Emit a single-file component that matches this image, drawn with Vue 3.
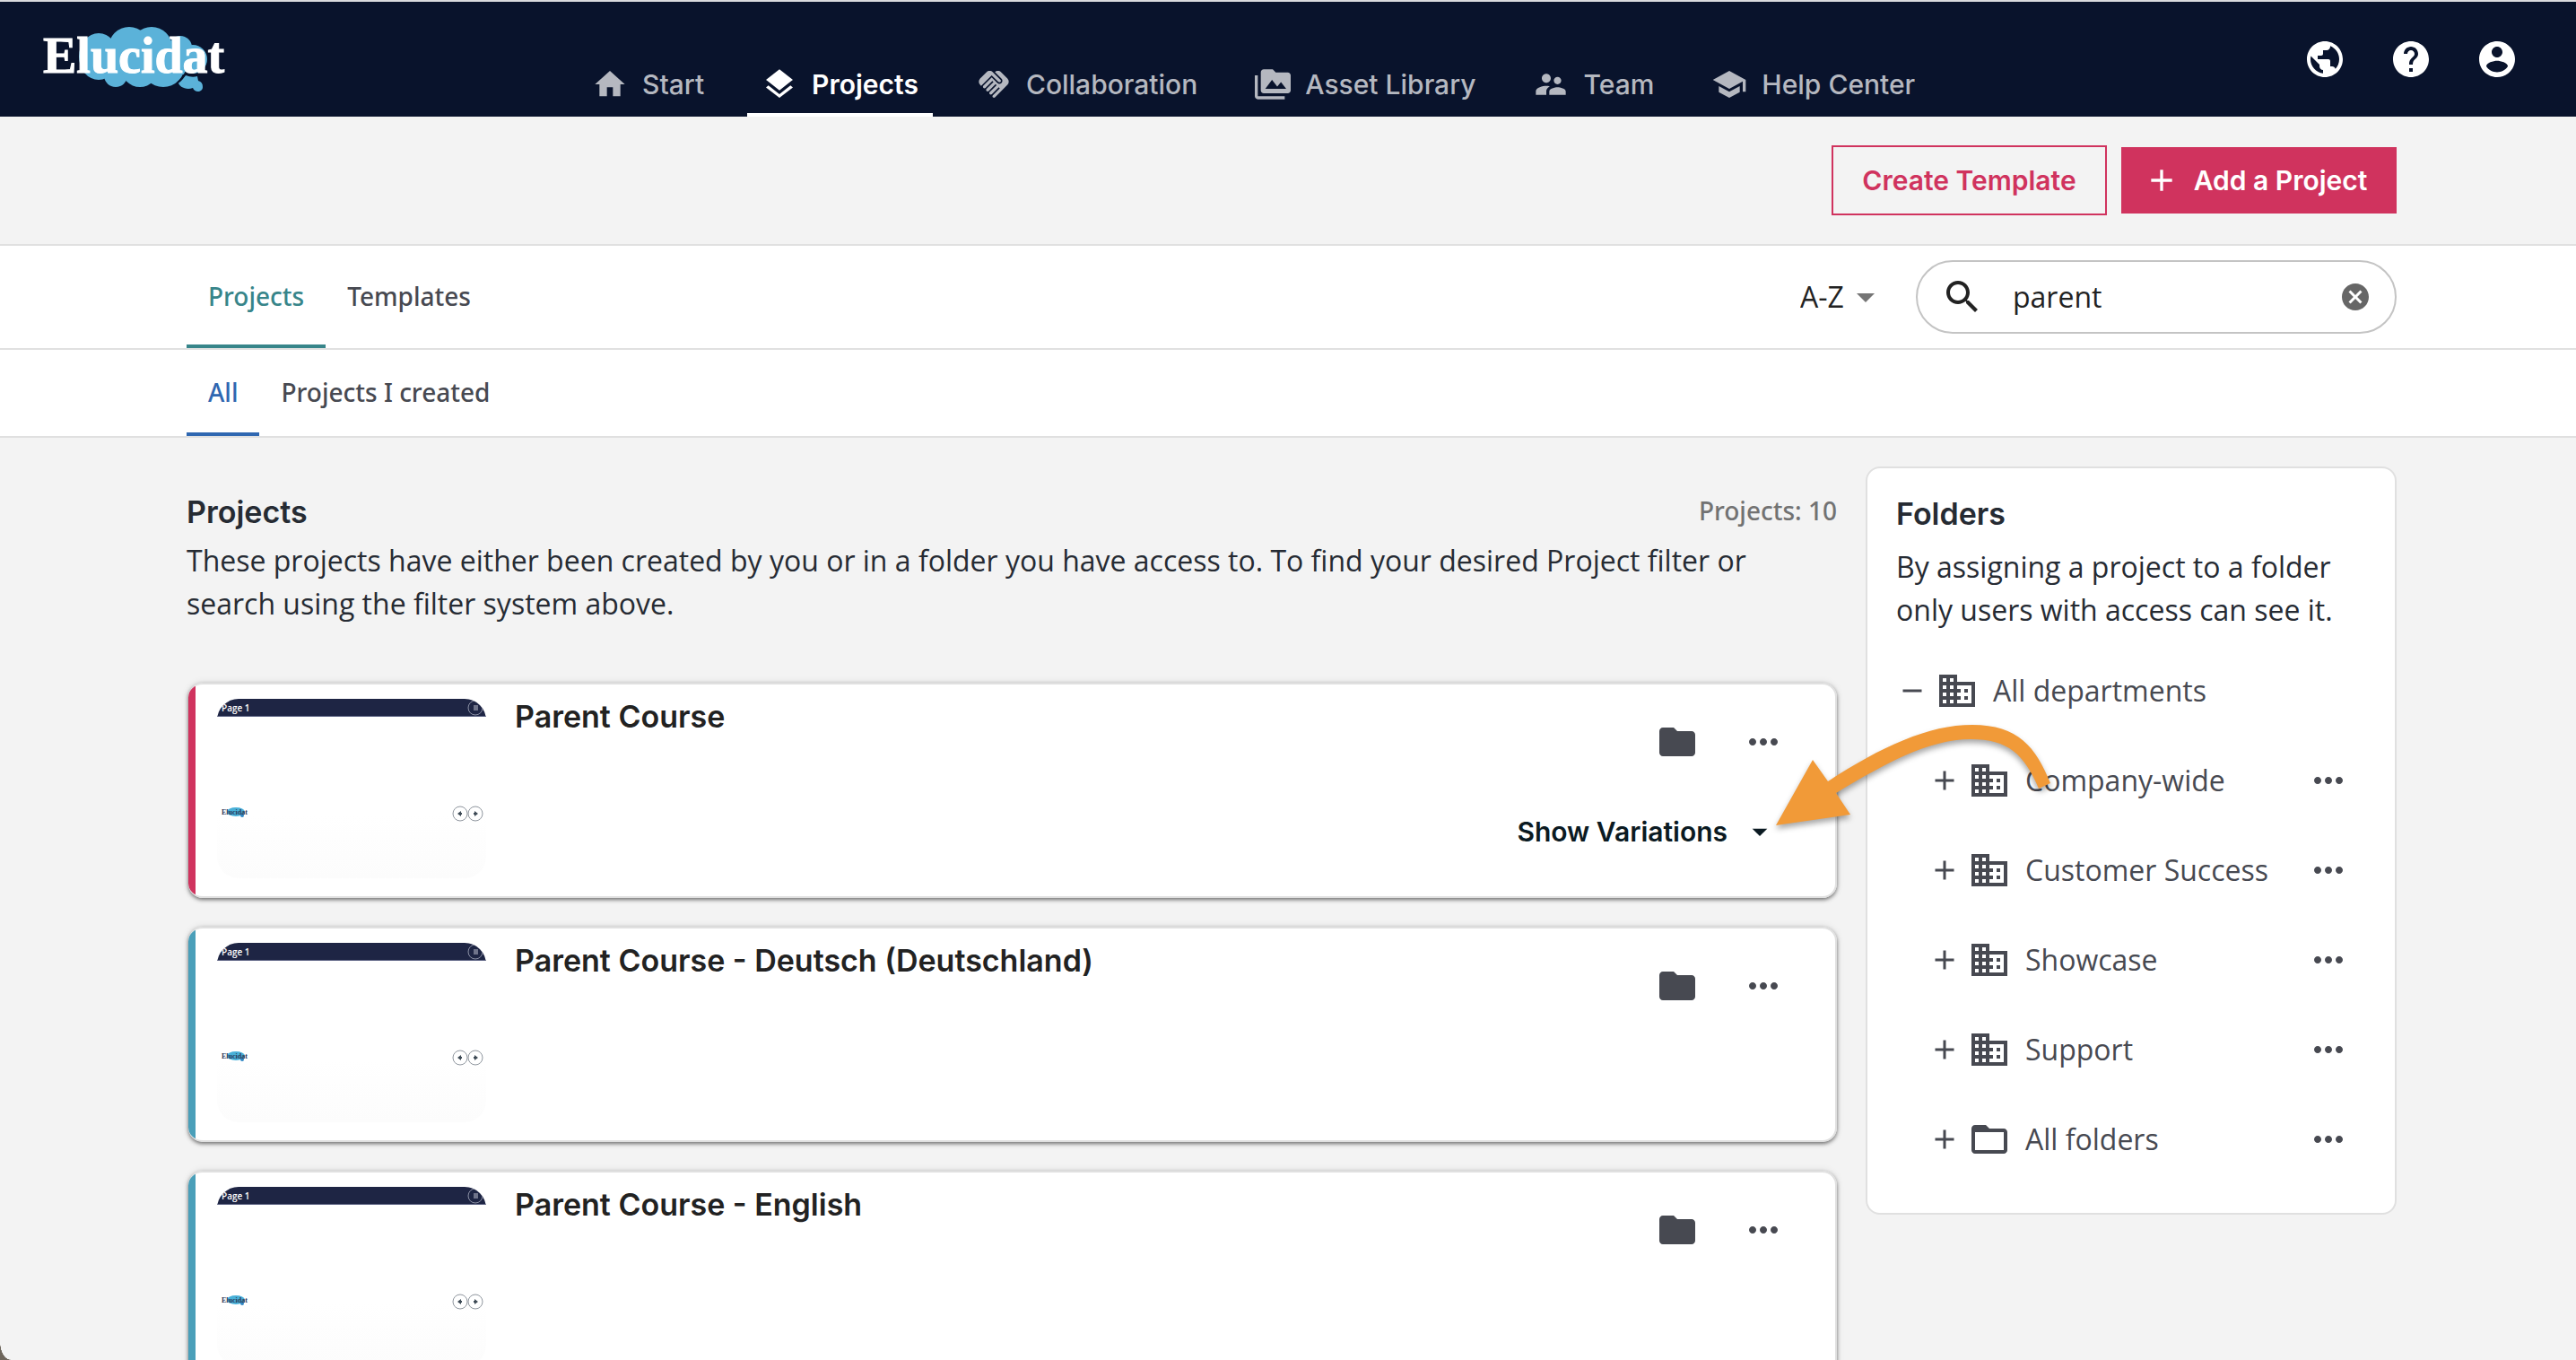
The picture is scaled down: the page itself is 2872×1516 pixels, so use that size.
<script setup>
import { ref } from 'vue'

const icons = {
  home: 'M10 20v-6h4v6h5v-8h3L12 3 2 12h3v8z',
  layers: 'M11.99 18.54l-7.37-5.73L3 14.07l9 7 9-7-1.63-1.27-7.38 5.74zM12 16l7.36-5.73L21 9l-9-7-9 7 1.63 1.27L12 16z',
  handshake: 'M16.48 10.41c-.39.39-1.04.39-1.43 0l-4.47-4.46-7.05 7.04-.66-.63c-1.17-1.17-1.17-3.07 0-4.24l4.24-4.24c1.17-1.17 3.07-1.17 4.24 0L16.48 9c.39.39.39 1.02 0 1.41zM17.18 8.29c.78.78.78 2.05 0 2.83-1.27 1.27-2.61.22-2.83 0l-3.76-3.76-5.57 5.57c-.39.39-.39 1.02 0 1.41.39.39 1.02.39 1.42 0l4.62-4.62.71.71-4.62 4.62c-.39.39-.39 1.02 0 1.41.39.39 1.02.39 1.42 0l4.62-4.62.71.71-4.62 4.62c-.39.39-.39 1.02 0 1.41.39.39 1.02.39 1.41 0l4.62-4.62.71.71-4.62 4.62c-.39.39-.39 1.02 0 1.41.39.39 1.02.39 1.41 0l8.32-8.34c1.17-1.17 1.17-3.07 0-4.24l-4.24-4.24c-1.15-1.15-3.01-1.17-4.18-.06l4.47 4.47z',
  media: 'M2 6H0v5h.01L0 20c0 1.1.9 2 2 2h18v-2H2V6zm20-2h-8l-2-2H6c-1.1 0-1.99.9-1.99 2L4 16c0 1.1.9 2 2 2h16c1.1 0 2-.9 2-2V6c0-1.1-.9-2-2-2zM7 15l4.5-6 3.5 4.51 2.5-3.01L21 15H7z',
  team: 'M16.5 12c1.38 0 2.49-1.12 2.49-2.5S17.88 7 16.5 7C15.12 7 14 8.12 14 9.5s1.12 2.5 2.5 2.5zM9 11c1.66 0 2.99-1.34 2.99-3S10.66 5 9 5C7.34 5 6 6.34 6 8s1.34 3 3 3zm7.5 3c-1.83 0-5.5.92-5.5 2.75V19h11v-2.25c0-1.83-3.67-2.75-5.5-2.75zM9 13c-2.33 0-7 1.17-7 3.5V19h7v-2.25c0-.85.33-2.34 2.37-3.47C10.5 13.1 9.66 13 9 13z',
  school: 'M5 13.18v4L12 21l7-3.82v-4L12 17l-7-3.82zM12 3L1 9l11 6 9-4.91V17h2V9L12 3z',
  globe: 'M12 2C6.48 2 2 6.48 2 12s4.48 10 10 10 10-4.48 10-10S17.52 2 12 2zm-1 17.93c-3.95-.49-7-3.85-7-7.93 0-.62.08-1.21.21-1.79L9 15v1c0 1.1.9 2 2 2v1.93zm6.9-2.54c-.26-.81-1-1.39-1.9-1.39h-1v-3c0-.55-.45-1-1-1H8v-2h2c.55 0 1-.45 1-1V7h2c1.1 0 2-.9 2-2v-.41c2.93 1.19 5 4.06 5 7.41 0 2.08-.8 3.97-2.1 5.39z',
  help: 'M12 2C6.48 2 2 6.48 2 12s4.48 10 10 10 10-4.48 10-10S17.52 2 12 2zm1 17h-2v-2h2v2zm2.07-7.75l-.9.92C13.45 12.9 13 13.5 13 15h-2v-.5c0-1.1.45-2.1 1.17-2.83l1.24-1.26c.37-.36.59-.86.59-1.41 0-1.1-.9-2-2-2s-2 .9-2 2H8c0-2.21 1.79-4 4-4s4 1.79 4 4c0 .88-.36 1.68-.93 2.25z',
  account: 'M12 2C6.48 2 2 6.48 2 12s4.48 10 10 10 10-4.48 10-10S17.52 2 12 2zm0 3c1.66 0 3 1.34 3 3s-1.34 3-3 3-3-1.34-3-3 1.34-3 3-3zm0 14.2c-2.5 0-4.71-1.28-6-3.22.03-1.99 4-3.08 6-3.08 1.99 0 5.97 1.09 6 3.08-1.29 1.94-3.5 3.22-6 3.22z',
  search: 'M15.5 14h-.79l-.28-.27C15.41 12.59 16 11.11 16 9.5 16 5.91 13.09 3 9.5 3S3 5.91 3 9.5 5.91 16 9.5 16c1.61 0 3.09-.59 4.23-1.57l.27.28v.79l5 4.99L20.49 19l-4.99-5zm-6 0C7.01 14 5 11.99 5 9.5S7.01 5 9.5 5 14 7.01 14 9.5 11.99 14 9.5 14z',
  cancel: 'M12 2C6.47 2 2 6.47 2 12s4.47 10 10 10 10-4.47 10-10S17.53 2 12 2zm5 13.59L15.59 17 12 13.41 8.41 17 7 15.59 10.59 12 7 8.41 8.41 7 12 10.59 15.59 7 17 8.41 13.41 12 17 15.59z',
  caret: 'M7 10l5 5 5-5z',
  folder: 'M10 4H4c-1.1 0-1.99.9-1.99 2L2 18c0 1.1.9 2 2 2h16c1.1 0 2-.9 2-2V8c0-1.1-.9-2-2-2h-8l-2-2z',
  folderOpen: 'M20 6h-8l-2-2H4c-1.1 0-1.99.9-1.99 2L2 18c0 1.1.9 2 2 2h16c1.1 0 2-.9 2-2V8c0-1.1-.9-2-2-2zm0 12H4V8h16v10z',
  business: 'M12 7V3H2v18h20V7H12zM6 19H4v-2h2v2zm0-4H4v-2h2v2zm0-4H4V9h2v2zm0-4H4V5h2v2zm4 12H8v-2h2v2zm0-4H8v-2h2v2zm0-4H8V9h2v2zm0-4H8V5h2v2zm10 12h-8v-2h2v-2h-2v-2h2v-2h-2V9h8v10zm-2-8h-2v2h2v-2zm0 4h-2v2h2v-2z',
  more: 'M6 10c-1.1 0-2 .9-2 2s.9 2 2 2 2-.9 2-2-.9-2-2-2zm12 0c-1.1 0-2 .9-2 2s.9 2 2 2 2-.9 2-2-.9-2-2-2zm-6 0c-1.1 0-2 .9-2 2s.9 2 2 2 2-.9 2-2-.9-2-2-2z',
  plus: 'M19 13h-6v6h-2v-6H5v-2h6V5h2v6h6v2z',
  minus: 'M19 13H5v-2h14v2z',
}

const nav = [
  { label: 'Start', icon: 'home' },
  { label: 'Projects', icon: 'layers', active: true },
  { label: 'Collaboration', icon: 'handshake' },
  { label: 'Asset Library', icon: 'media' },
  { label: 'Team', icon: 'team' },
  { label: 'Help Center', icon: 'school' },
]

const utilities = [
  { label: 'Language', icon: 'globe' },
  { label: 'Help', icon: 'help' },
  { label: 'Account', icon: 'account' },
]

const projects = [
  { title: 'Parent Course', parent: true },
  { title: 'Parent Course - Deutsch (Deutschland)' },
  { title: 'Parent Course - English' },
]

const folders = [
  { name: 'Company-wide', icon: 'business' },
  { name: 'Customer Success', icon: 'business' },
  { name: 'Showcase', icon: 'business' },
  { name: 'Support', icon: 'business' },
  { name: 'All folders', icon: 'folderOpen' },
]

const sort = ref('A-Z')
const query = ref('parent')
</script>

<template>
  <div class="app">
    <header class="topbar">
      <a class="brand" href="#" aria-label="Elucidat">
        <svg width="212" height="80" viewBox="46 26 212 80">
          <g fill="#5bb2d9">
            <ellipse cx="110" cy="63" rx="22" ry="26" />
            <circle cx="144" cy="53" r="23" />
            <circle cx="169" cy="53" r="23" />
            <circle cx="201" cy="53" r="13" />
            <circle cx="215" cy="66" r="16" />
            <circle cx="129" cy="84" r="13" />
            <circle cx="156" cy="76" r="21" />
            <circle cx="182" cy="73" r="24" />
            <rect x="115" y="50" width="92" height="33" />
            <path d="M207 84q7 3 13 1l1 5a7 7 0 0 1 5 7c0 6-9 7-11 1-8 3-16-2-16-6z" />
          </g>
          <path d="M198 92q6-4 9-11 8 4 16 1" fill="none" stroke="#09132c" stroke-width="2" />
          <text class="wordmark" x="48" y="81">Elucidat</text>
        </svg>
      </a>
      <nav class="nav" aria-label="Main">
        <a v-for="item in nav" :key="item.label" href="#" class="nav-link" :class="{ active: item.active }">
          <svg class="i40" viewBox="0 0 24 24"><path :d="icons[item.icon]" /></svg>
          <span>{{ item.label }}</span>
        </a>
      </nav>
      <div class="utilities">
        <button v-for="u in utilities" :key="u.label" type="button" :aria-label="u.label">
          <svg class="i48" viewBox="0 0 24 24"><path :d="icons[u.icon]" /></svg>
        </button>
      </div>
    </header>

    <section class="actions band">
      <button type="button" class="btn outline">Create Template</button>
      <button type="button" class="btn solid">
        <svg class="i40" viewBox="0 0 24 24"><path :d="icons.plus" /></svg>
        <span>Add a Project</span>
      </button>
    </section>

    <section class="filters band">
      <nav class="tabs teal" aria-label="Content type">
        <a href="#" class="active">Projects</a>
        <a href="#">Templates</a>
      </nav>
      <div class="tools">
        <label class="sort">
          <select v-model="sort" aria-label="Sort order">
            <option>A-Z</option>
            <option>Z-A</option>
          </select>
          <svg class="i48" viewBox="0 0 24 24"><path :d="icons.caret" /></svg>
        </label>
        <label class="search">
          <svg class="i48" viewBox="0 0 24 24"><path :d="icons.search" /></svg>
          <input v-model="query" type="text" aria-label="Search projects" />
          <button type="button" aria-label="Clear search" @click="query = ''">
            <svg class="i36" viewBox="0 0 24 24"><path :d="icons.cancel" /></svg>
          </button>
        </label>
      </div>
    </section>

    <section class="subfilters band">
      <nav class="tabs blue" aria-label="Ownership">
        <a href="#" class="active">All</a>
        <a href="#">Projects I created</a>
      </nav>
    </section>

    <main class="content">
      <section class="projects">
        <div class="heading">
          <h1>Projects</h1>
          <span class="count">Projects: 10</span>
        </div>
        <p>These projects have either been created by you or in a folder you have access to. To find your desired Project filter or search using the filter system above.</p>

        <div class="cards">
          <article v-for="p in projects" :key="p.title" class="card" :class="{ parent: p.parent }">
            <div class="thumb">
              <div class="thumb-bar">
                <span>Page 1</span>
                <svg width="18" height="18" viewBox="0 0 18 18">
                  <circle cx="9" cy="9" r="8" fill="none" stroke="#8c91a5" />
                  <path d="M7 7h5M7 9h5M7 11h5" stroke="#c0c3d0" />
                </svg>
              </div>
              <div class="thumb-foot">
                <svg width="32" height="14" viewBox="0 0 32 14">
                  <ellipse cx="17" cy="6" rx="10" ry="5" fill="#48b0d8" />
                  <circle cx="24" cy="10" r="2" fill="#2f86c4" />
                  <text class="thumb-logo" x="1" y="9">Elucidat</text>
                </svg>
                <svg width="36" height="18" viewBox="0 0 36 18">
                  <g fill="none" stroke="#8f969e">
                    <circle cx="10" cy="8" r="8" />
                    <circle cx="27" cy="8" r="8" />
                  </g>
                  <path d="M7 8l4-3v2h1v2h-1v2zM30 8l-4-3v2h-1v2h1v2z" fill="#3d4a55" />
                </svg>
              </div>
            </div>
            <h2>{{ p.title }}</h2>
            <div class="card-side">
              <div class="card-icons">
                <button type="button" aria-label="Move to folder">
                  <svg class="i48" viewBox="0 0 24 24"><path :d="icons.folder" /></svg>
                </button>
                <button type="button" aria-label="More options">
                  <svg class="i48" viewBox="0 0 24 24"><path :d="icons.more" /></svg>
                </button>
              </div>
              <button v-if="p.parent" type="button" class="variations">
                <span>Show Variations</span>
                <svg class="i40" viewBox="0 0 24 24"><path :d="icons.caret" /></svg>
              </button>
            </div>
          </article>
        </div>
      </section>

      <aside class="folders">
        <h2>Folders</h2>
        <p>By assigning a project to a folder only users with access can see it.</p>
        <div class="row">
          <button type="button" aria-label="Collapse All departments">
            <svg class="i36" viewBox="0 0 24 24"><path :d="icons.minus" /></svg>
          </button>
          <svg class="i48" viewBox="0 0 24 24"><path :d="icons.business" /></svg>
          <a href="#">All departments</a>
        </div>
        <div v-for="f in folders" :key="f.name" class="row child">
          <button type="button" :aria-label="'Expand ' + f.name">
            <svg class="i36" viewBox="0 0 24 24"><path :d="icons.plus" /></svg>
          </button>
          <svg class="i48" viewBox="0 0 24 24"><path :d="icons[f.icon]" /></svg>
          <a href="#">{{ f.name }}</a>
          <button type="button" class="row-more" :aria-label="'Options for ' + f.name">
            <svg class="i48" viewBox="0 0 24 24"><path :d="icons.more" /></svg>
          </button>
        </div>

        <!-- callout arrow pointing from the folder list to the variations toggle -->
        <svg class="callout" width="320" height="130" viewBox="1974 800 320 130">
          <path d="M1980 919L2021 846 2038 870C2098 831 2150 807 2199 807 2250 807 2270 832 2286 872L2273 878C2257 840 2239 823 2197 823 2150 823 2100 851 2047 883L2063 907Z" />
        </svg>
      </aside>
    </main>
    <span class="corner" aria-hidden="true"></span>
  </div>
</template>

<style>
body {
  background: #f3f3f3;
}
</style>

<style scoped>
* {
  box-sizing: border-box;
}
.app {
  position: relative;
  display: flex;
  flex-direction: column;
  height: 100vh;
  overflow: hidden;
  background: #f3f3f3;
  color: #262b33;
  font-family: "Open Sans", "Noto Sans", sans-serif;
  font-size: 32px;
  line-height: 48px;
}
a {
  color: inherit;
  text-decoration: none;
}
button {
  display: flex;
  align-items: center;
  padding: 0;
  border: 0;
  background: none;
  color: inherit;
  font: inherit;
}
svg {
  flex: none;
  display: block;
  fill: currentColor;
}
h1,
h2,
p {
  margin: 0;
}
h1,
h2 {
  font-family: Inter, sans-serif;
  font-size: 34px;
  font-weight: 600;
  line-height: 48px;
}
.i36 { width: 36px; height: 36px; }
.i40 { width: 40px; height: 40px; }
.i48 { width: 48px; height: 48px; }

.topbar {
  flex: none;
  display: flex;
  height: 130px;
  padding: 0 64px 0 46px;
  border-top: 2px solid #d9dade;
  background: #09132c;
  color: #fff;
}
.brand {
  margin-top: 24px;
}
.wordmark {
  fill: #fff;
  stroke: #fff;
  stroke-width: 1px;
  font: bold 56px "Liberation Serif", serif;
}
.nav {
  display: flex;
  gap: 32px;
  margin-left: 386px;
}
.nav-link {
  display: flex;
  align-items: center;
  gap: 16px;
  padding: 76px 16px 16px;
  border-bottom: 4px solid transparent;
  color: #b5b8c0;
  font: 500 30px/32px Inter, sans-serif;
  white-space: nowrap;
}
.nav-link svg {
  margin: -4px 0;
}
.nav-link.active {
  border-color: #fff;
  color: #fff;
  font-weight: 600;
}
.utilities {
  display: flex;
  gap: 48px;
  height: 48px;
  margin: 40px 0 0 auto;
}

.band {
  flex: none;
  display: flex;
  align-items: center;
  padding: 0 200px 0 208px;
  border-bottom: 2px solid #e0e0e0;
}
.actions {
  justify-content: flex-end;
  gap: 16px;
  height: 144px;
}
.btn {
  justify-content: center;
  gap: 16px;
  min-width: 307px;
  height: 74px;
  padding: 0 24px;
  font: 600 30px/40px Inter, sans-serif;
}
.outline {
  height: 78px;
  border: 2px solid #d0335e;
  color: #d0335e;
}
.solid {
  padding-right: 32px;
  background: #d0335e;
  color: #fff;
}
.filters {
  justify-content: space-between;
  height: 116px;
  background: #fff;
}
.subfilters {
  height: 98px;
  background: #fff;
}
.tabs {
  display: flex;
  align-self: stretch;
  color: #474951;
  font-family: "Noto Sans", "Open Sans", sans-serif;
  font-size: 28px;
  font-weight: 500;
}
.tabs a {
  display: flex;
  align-items: center;
  padding: 2px 24px 0;
  border-bottom: 4px solid transparent;
}
.teal .active {
  border-color: #37858a;
  color: #37858a;
}
.blue .active {
  border-color: #2f67b1;
  color: #2f67b1;
}
.tools {
  display: flex;
  align-items: center;
  gap: 32px;
}
.sort {
  display: flex;
  align-items: center;
  color: #757575;
}
.sort select {
  appearance: none;
  padding: 0;
  border: 0;
  background: none;
  color: #222;
  font: inherit;
}
.search {
  display: flex;
  align-items: center;
  gap: 32px;
  width: 536px;
  height: 82px;
  padding: 0 26px;
  border: 2px solid #c4c4c4;
  border-radius: 41px;
  color: #222;
}
.search input {
  flex: 1;
  min-width: 0;
  padding: 0;
  border: 0;
  outline: 0;
  background: none;
  color: #222;
  font: inherit;
}
.search button {
  color: #666;
}

.content {
  display: flex;
  align-items: flex-start;
  gap: 32px;
  padding: 32px 200px 0 208px;
}
.projects {
  flex: 1;
  padding-top: 27px;
}
.heading {
  display: flex;
  justify-content: space-between;
  margin-bottom: 6px;
}
.count {
  color: #727272;
  font-family: "Noto Sans", "Open Sans", sans-serif;
  font-size: 28px;
  font-weight: 500;
  line-height: 44px;
}
.cards {
  display: flex;
  flex-direction: column;
  gap: 32px;
  padding: 64px 0 32px 2px;
}
.card {
  display: flex;
  height: 240px;
  padding: 16px 56px 16px 32px;
  border: 2px solid #e0e0e0;
  border-left: 0;
  border-radius: 16px;
  background: linear-gradient(to right, #4a9fb9 8px, #fff 8px);
  box-shadow: 0 2px 4px rgba(0, 0, 0, 0.5), 0 0 8px rgba(0, 0, 0, 0.1);
}
.card.parent {
  background: linear-gradient(to right, #d0335e 8px, #fff 8px);
}
.card h2 {
  flex: 1;
  padding-left: 32px;
  color: #222;
  line-height: 40px;
}
.thumb {
  width: 300px;
  height: 200px;
  border-radius: 24px;
  background: linear-gradient(#fff 65%, #fcfcfc);
  overflow: hidden;
}
.thumb-bar {
  display: flex;
  align-items: center;
  justify-content: space-between;
  height: 20px;
  padding: 0 3px 0 5px;
  border-bottom: 1px solid #5c6383;
  background: #1e2544;
  color: #fff;
  font: 600 10px/18px "Open Sans", sans-serif;
}
.thumb-foot {
  display: flex;
  justify-content: space-between;
  padding: 100px 3px 0 4px;
}
.thumb-foot svg {
  overflow: visible;
}
.thumb-logo {
  fill: #2b3656;
  font: bold 8px "Liberation Serif", serif;
}
.card-side {
  display: flex;
  flex-direction: column;
  align-items: flex-end;
  gap: 52px;
  padding-top: 24px;
  color: #474951;
}
.card-icons {
  display: flex;
  gap: 48px;
}
.variations {
  gap: 16px;
  height: 48px;
  padding-right: 8px;
  color: #0b1a22;
  font: 600 30px/40px Inter, sans-serif;
}

.folders {
  position: relative;
  width: 592px;
  padding: 27px 32px 32px;
  border: 2px solid #e0e0e0;
  border-radius: 16px;
  background: #fff;
}
.folders p {
  margin: 11px 0 16px;
}
.row {
  display: flex;
  align-items: center;
  height: 100px;
  color: #474951;
}
.row button {
  margin-right: 8px;
}
.row a {
  margin-left: 16px;
}
.child {
  padding-left: 36px;
}
.row .row-more {
  margin: 0 18px 0 auto;
}
.callout {
  position: absolute;
  top: 279px;
  left: -108px;
  fill: #f19a38;
  filter: drop-shadow(0 4px 3px rgba(0, 0, 0, 0.35));
  overflow: visible;
  pointer-events: none;
}
.corner {
  position: absolute;
  bottom: 0;
  left: 0;
  width: 12px;
  height: 20px;
  background: radial-gradient(ellipse 12px 20px at 100% 0, transparent 97%, #6d655b);
}
</style>
